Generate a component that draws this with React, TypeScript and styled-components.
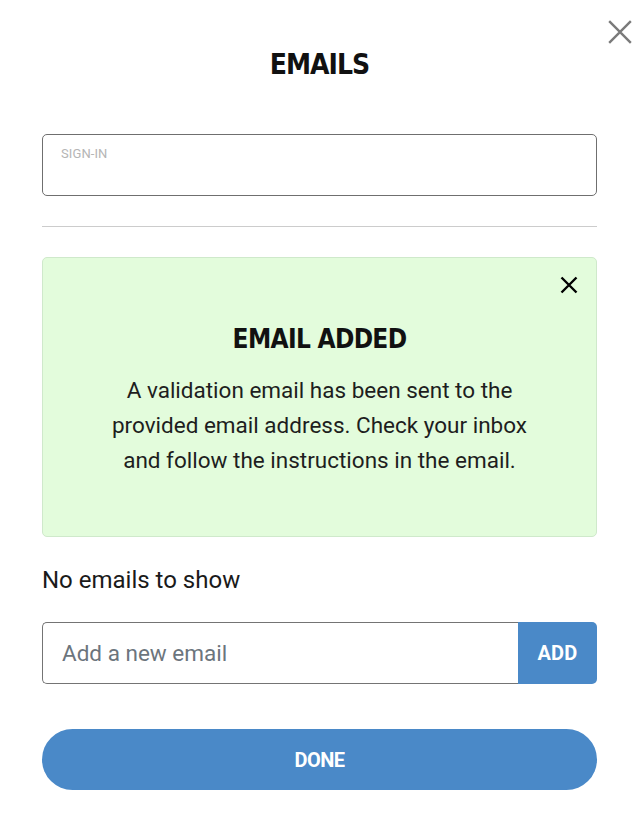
import React from "react";
import styled, { createGlobalStyle } from "styled-components";

const Global = createGlobalStyle`
  html, body { margin: 0; padding: 0; background: #ffffff; }
  body { font-family: Roboto, "Liberation Sans", sans-serif; color: #212121; }
  * { box-sizing: border-box; }
`;

const headingFont = `"DejaVu Sans Condensed", Roboto, sans-serif`;

const Modal = styled.div`
  position: relative;
  width: 643px;
  min-height: 821px;
  padding: 45px 46px 0 42px;
  display: flex;
  flex-direction: column;
`;

const CloseButton = styled.button<{ $size: number; $color: string; $top: number; $right: number }>`
  position: absolute;
  top: ${(p) => p.$top}px;
  right: ${(p) => p.$right}px;
  width: ${(p) => p.$size}px;
  height: ${(p) => p.$size}px;
  padding: 0;
  border: 0;
  background: transparent;
  color: ${(p) => p.$color};
  cursor: pointer;
  display: flex;
  svg { display: block; width: 100%; height: 100%; }
`;

const Title = styled.h1`
  margin: 0;
  height: 40px;
  line-height: 40px;
  text-align: center;
  font-family: ${headingFont};
  font-weight: 700;
  font-size: 28px;
  letter-spacing: -1px;
  color: #111;
`;

const Field = styled.div`
  margin-top: 49px;
  height: 62px;
  border: 1px solid #6f6f6f;
  border-radius: 5px;
  padding: 11px 18px;
`;

const FieldLabel = styled.div`
  font-size: 13px;
  line-height: 16px;
  color: #b5b5b5;
  letter-spacing: 0.1px;
`;

const Divider = styled.hr`
  margin: 30px 0 0 0;
  border: 0;
  border-top: 1px solid #cccccc;
  height: 0;
`;

const Notice = styled.div`
  position: relative;
  margin-top: 30px;
  height: 280px;
  background: #e3fcdc;
  border: 1px solid #cfe9cb;
  border-radius: 5px;
  padding: 61px 20px 0;
  display: flex;
  flex-direction: column;
  align-items: center;
`;

const NoticeTitle = styled.h2`
  margin: 0;
  height: 40px;
  line-height: 40px;
  font-family: ${headingFont};
  font-weight: 700;
  font-size: 26px;
  letter-spacing: -0.7px;
  color: #111;
`;

const NoticeText = styled.p`
  margin: 14px 0 0;
  max-width: 440px;
  text-align: center;
  font-size: 22.5px;
  line-height: 35px;
  color: #1e1e1e;
`;

const EmptyText = styled.div`
  margin-top: 28px;
  font-size: 24px;
  line-height: 30px;
  color: #1a1a1a;
`;

const AddRow = styled.div`
  margin-top: 27px;
  display: flex;
  height: 62px;
`;

const EmailInput = styled.input`
  flex: 1;
  min-width: 0;
  height: 100%;
  border: 1px solid #747474;
  border-right: 0;
  border-radius: 5px 0 0 5px;
  padding: 0 19px;
  font-family: Roboto, "Liberation Sans", sans-serif;
  font-size: 22.5px;
  color: #222;
  outline: none;
  &::placeholder { color: #6c757d; }
`;

const PrimaryButton = styled.button<{ $pill?: boolean }>`
  border: 0;
  background: #4a89c8;
  color: #ffffff;
  font-family: Roboto, "Liberation Sans", sans-serif;
  font-weight: 700;
  font-size: 20px;
  cursor: pointer;
  border-radius: ${(p) => (p.$pill ? "31px" : "0 5px 5px 0")};
`;

const AddButton = styled(PrimaryButton)`
  width: 79px;
  height: 100%;
  letter-spacing: 0.2px;
`;

const DoneButton = styled(PrimaryButton)`
  margin-top: 45px;
  width: 100%;
  height: 61px;
  font-size: 20px;
  letter-spacing: -0.5px;
`;

const XIcon = ({ stroke }: { stroke: number }) => (
  <svg viewBox="0 0 24 24" fill="none" stroke="currentColor" strokeWidth={stroke} strokeLinecap="butt">
    <path d="M2 2 L22 22 M22 2 L2 22" />
  </svg>
);

export default function App() {
  return (
    <>
      <Global />
      <Modal>
        <CloseButton $size={26} $color="#7a7a7a" $top={19} $right={10} aria-label="Close">
          <XIcon stroke={2.2} />
        </CloseButton>
        <Title>EMAILS</Title>
        <Field>
          <FieldLabel>SIGN-IN</FieldLabel>
        </Field>
        <Divider />
        <Notice>
          <CloseButton $size={18} $color="#000" $top={18} $right={18} aria-label="Dismiss">
            <XIcon stroke={3.2} />
          </CloseButton>
          <NoticeTitle>EMAIL ADDED</NoticeTitle>
          <NoticeText>
            A validation email has been sent to the provided email address. Check your inbox and follow the
            instructions in the email.
          </NoticeText>
        </Notice>
        <EmptyText>No emails to show</EmptyText>
        <AddRow>
          <EmailInput placeholder="Add a new email" />
          <AddButton>ADD</AddButton>
        </AddRow>
        <DoneButton $pill>DONE</DoneButton>
      </Modal>
    </>
  );
}
